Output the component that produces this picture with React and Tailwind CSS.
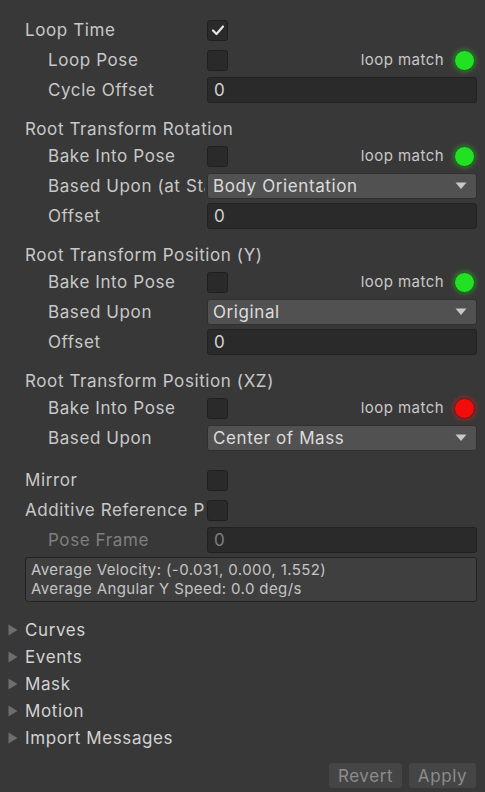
import React from "react";

const font = { fontFamily: "Inter, 'Noto Sans', sans-serif" };

function Check({ checked }) {
  return (
    <div className="w-[21px] h-[21px] rounded-[3px] bg-[#2a2a2a] border border-[#1f1f1f] flex items-center justify-center">
      {checked && (
        <svg width="14" height="12" viewBox="0 0 14 12">
          <path d="M2 6.5 L5.5 10 L12 2.5" stroke="#e6e6e6" strokeWidth="2.2" fill="none" strokeLinecap="round" strokeLinejoin="round" />
        </svg>
      )}
    </div>
  );
}

function Light({ color }) {
  const green = color === "green";
  return (
    <div
      className={
        green
          ? "w-[21px] h-[21px] rounded-full bg-[#22e022] border border-[#1d5a1d] shadow-[0_0_4px_1px_rgba(40,200,40,0.45)]"
          : "w-[21px] h-[21px] rounded-full bg-[#f20c0c] border border-[#5a1d1d] shadow-[0_0_5px_1px_rgba(230,30,30,0.55)]"
      }
    />
  );
}

function Row({ label, indent, children, dim }) {
  return (
    <div className="h-[30px] flex items-center">
      <div
        className={
          (indent ? "pl-[48px] " : "pl-[25px] ") +
          "w-[205px] mr-[2px] shrink-0 overflow-hidden whitespace-nowrap leading-[22px] " +
          (dim ? "text-[#7f7f7f]" : "text-[#c8c8c8]")
        }
      >
        {label}
      </div>
      <div className="flex-1 pr-[8px] flex items-center">{children}</div>
    </div>
  );
}

function Field({ value, dim }) {
  return (
    <div
      className={
        "h-[26px] w-full rounded-[3px] bg-[#2a2a2a] border border-[#212121] flex items-center pl-[6px] " +
        (dim ? "text-[#7f7f7f]" : "text-[#d2d2d2]")
      }
    >
      {value}
    </div>
  );
}

function Dropdown({ value }) {
  return (
    <div className="h-[26px] w-full rounded-[3px] bg-[#515151] border border-[#303030] flex items-center pl-[5px] pr-[9px] text-[#dcdcdc]">
      <span className="flex-1">{value}</span>
      <svg width="12" height="8" viewBox="0 0 12 8">
        <path d="M0.5 0.5 L11.5 0.5 L6 7 Z" fill="#c8c8c8" />
      </svg>
    </div>
  );
}

function CheckMatch({ checked, color }) {
  return (
    <div className="w-full flex items-center">
      <Check checked={checked} />
      <div className="flex-1" />
      <span className="text-[15px] tracking-[0.45px] text-[#c8c8c8] mr-[10px] leading-[20px]">loop match</span>
      <Light color={color} />
      <div className="w-[2px]" />
    </div>
  );
}

function Heading({ children }) {
  return (
    <div className="h-[24px] mt-[12px] flex items-center pl-[25px] text-[#c8c8c8] whitespace-nowrap leading-[22px]">
      {children}
    </div>
  );
}

function Foldout({ children }) {
  return (
    <div className="h-[27px] flex items-center text-[#d2d2d2] leading-[22px]">
      <div className="w-[25px] flex items-center pl-[8px]">
        <svg width="10" height="12" viewBox="0 0 10 12">
          <path d="M0.5 0.5 L9.5 6 L0.5 11.5 Z" fill="#6e6e6e" />
        </svg>
      </div>
      {children}
    </div>
  );
}

export default function App() {
  return (
    <div className="w-[485px] h-[792px] bg-[#383838] text-[17px] tracking-[0.6px] leading-none overflow-hidden" style={font}>
      <div className="h-[15px]" />
      <Row label="Loop Time">
        <Check checked />
      </Row>
      <Row label="Loop Pose" indent>
        <CheckMatch color="green" />
      </Row>
      <Row label="Cycle Offset" indent>
        <Field value="0" />
      </Row>

      <Heading>Root Transform Rotation</Heading>
      <Row label="Bake Into Pose" indent>
        <CheckMatch color="green" />
      </Row>
      <Row label="Based Upon (at Start)" indent>
        <Dropdown value="Body Orientation" />
      </Row>
      <Row label="Offset" indent>
        <Field value="0" />
      </Row>

      <Heading>Root Transform Position (Y)</Heading>
      <Row label="Bake Into Pose" indent>
        <CheckMatch color="green" />
      </Row>
      <Row label="Based Upon" indent>
        <Dropdown value="Original" />
      </Row>
      <Row label="Offset" indent>
        <Field value="0" />
      </Row>

      <Heading>Root Transform Position (XZ)</Heading>
      <Row label="Bake Into Pose" indent>
        <CheckMatch color="red" />
      </Row>
      <Row label="Based Upon" indent>
        <Dropdown value="Center of Mass" />
      </Row>

      <div className="h-[12px]" />
      <Row label="Mirror">
        <Check />
      </Row>
      <Row label="Additive Reference Pose">
        <Check />
      </Row>
      <Row label="Pose Frame" indent dim>
        <Field value="0" dim />
      </Row>

      <div className="mx-[25px] mr-[8px] mt-[2px] h-[45px] rounded-[3px] bg-[#3f3f3f] border border-[#222222] flex flex-col justify-center pl-[5px] gap-[3px] text-[15px] tracking-[0.4px] leading-[16px] text-[#c4c4c4]">
        <div>Average Velocity: (-0.031, 0.000, 1.552)</div>
        <div>Average Angular Y Speed: 0.0 deg/s</div>
      </div>

      <div className="h-[14px]" />
      <Foldout>Curves</Foldout>
      <Foldout>Events</Foldout>
      <Foldout>Mask</Foldout>
      <Foldout>Motion</Foldout>
      <Foldout>Import Messages</Foldout>

      <div className="flex justify-end gap-[7px] pr-[9px] mt-[12px]">
        <div className="h-[25px] w-[73px] rounded-[3px] bg-[#454545] flex items-center justify-center text-[#8c8c8c] leading-[20px]">Revert</div>
        <div className="h-[25px] w-[67px] rounded-[3px] bg-[#454545] flex items-center justify-center text-[#8c8c8c] leading-[20px]">Apply</div>
      </div>
    </div>
  );
}
